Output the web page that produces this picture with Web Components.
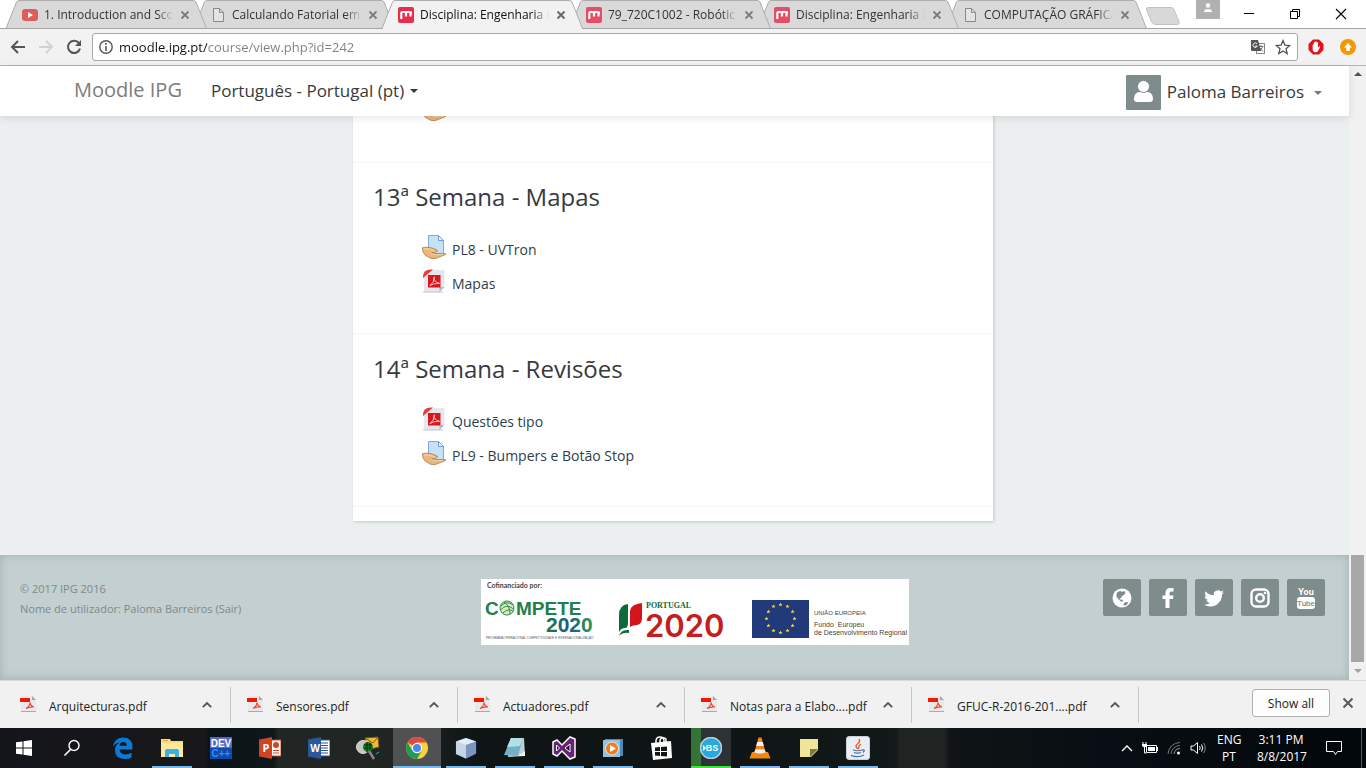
<!DOCTYPE html>
<html lang="pt">
<head>
<meta charset="utf-8">
<title>Disciplina: Engenharia Informática</title>
<style>
html, body { margin: 0; height: 100%; }
body { font-family: "Open Sans", "Noto Sans", sans-serif; overflow: hidden; }
</style>
</head>
<body>
<desktop-screen></desktop-screen>
<script>
const BASE = `
*, *::before { box-sizing: border-box; }
button, select, input { font: inherit; color: inherit; background: none; border: 0; margin: 0; padding: 0; }
a { color: inherit; text-decoration: none; }
`;

function define(name, css, html) {
  const tpl = document.createElement('template');
  customElements.define(name, class extends HTMLElement {
    constructor() {
      super();
      this.attachShadow({ mode: 'open' });
    }
    connectedCallback() {
      tpl.innerHTML = `<style>${BASE}${css}</style>${typeof html === 'function' ? html(this) : html}`;
      this.shadowRoot.replaceChildren(tpl.content.cloneNode(true));
    }
  });
}

/* name: [width, height, markup] */
const ICONS = {
  youtube: [16, 16, `<rect y="2" width="16" height="12" rx="3" fill="#e0403f"/><path d="M6 5l5 3-5 3z" fill="#fff"/>`],
  page: [16, 16, `<path d="M3.500 1.500h6l4 4v9h-10z M9.500 1.500v4h4" fill="#e6e6e6" stroke="#777"/>`],
  moodle: [16, 16, `<rect width="16" height="16" rx="2" fill="#e92d4a"/><path d="M3.300 12V6Q3.300 5 4.500 5H11.500Q12.500 5 12.500 6V9.500M8 5V9.500M12 5.500h2" fill="none" stroke="#fff" stroke-width="2.200"/>`],
  tabclose: [10, 10, `<path d="M1.500 1.500l7 7M8.500 1.500l-7 7" stroke="#666" stroke-width="1.800"/>`],
  newtab: [36, 18, `<path d="M3 .5h23q2 0 3 2l5 12q1 3-2 3H11q-3 0-4-2L1.500 3Q1 .5 3 .5z" fill="#d8d8d8" stroke="#c2c2c2"/>`],
  profile: [24, 19, `<rect width="24" height="19" fill="#b0b0b0"/><circle cx="12" cy="5.500" r="2.200" fill="#fff"/><path d="M8 12q0-3 4-3t4 3z" fill="#fff"/>`],
  min: [12, 12, `<path d="M1 5.500h10" stroke="#000"/>`],
  restore: [12, 12, `<path d="M1.500 3.500h7v7h-7zM3.500 3.500v-2h7v7h-2" fill="none" stroke="#000"/>`],
  close: [12, 12, `<path d="M1 1l10 10M11 1L1 11" stroke="#000" stroke-width="1.100"/>`],
  back: [16, 16, `<path d="M15 8H2.500M8 2L2 8l6 6" fill="none" stroke="#555" stroke-width="2"/>`],
  forward: [16, 16, `<path d="M1 8h12.500M8 2l6 6-6 6" fill="none" stroke="#d2d2d2" stroke-width="2"/>`],
  reload: [16, 16, `<path d="M13 4.200A6.100 6.100 0 1 0 14 9.500" fill="none" stroke="#555" stroke-width="2"/><path d="M15 1v6H9z" fill="#555"/>`],
  info: [14, 14, `<circle cx="7" cy="7" r="6.200" fill="none" stroke="#555" stroke-width="1.400"/><path d="M7 6v5M7 3v1.800" stroke="#555" stroke-width="1.600"/>`],
  translate: [16, 14, `<rect x="6.500" y="3.500" width="8" height="10" fill="#fff" stroke="#888"/><path d="M8.500 6.500h5M11 5v1.500M12.500 7q-1 3-4 4M10 8l3 3.500" stroke="#777" fill="none"/><path d="M1 0h7l3 11H2q-1 0-1-1z" fill="#555"/><path d="M7 3.800A2.200 2.200 0 1 0 7.300 6H5.200" fill="none" stroke="#fff"/>`],
  star: [16, 16, `<path d="M8 1.500l1.900 4.600 4.900.4-3.800 3.200 1.200 4.800L8 11.900l-4.200 2.600L5 9.700 1.200 6.500l4.900-.4z" fill="none" stroke="#555" stroke-width="1.300"/>`],
  adblock: [16, 16, `<path d="M5 .5h6L15.500 5v6L11 15.500H5L.5 11V5z" fill="#e0141f"/><path d="M4.700 9V5.500q.7-.7 1.100 0V8 3.500q.8-.8 1.300 0V7.500 2.700q.8-.8 1.400 0v5V3.500q.8-.7 1.400 0V9l1-1.500q1-.6 1.300.3L10 12q-1 1.500-3 1.300-2-.3-2.300-2.300z" fill="#fff"/>`],
  uparrow: [16, 16, `<circle cx="8" cy="8" r="8" fill="#f39800"/><path d="M8 4l4 4.500H9.700V12H6.300V8.500H4z" fill="#fff"/>`],
  caret: [8, 4, `<path d="M0 0h8L4 4z" fill="currentColor"/>`],
  avatar: [35, 35, `<rect width="35" height="35" rx="1" fill="#7f8c8c"/><path d="M8 24q0-6 5-7h9q5 1 5 7 0 3-3 3H11q-3 0-3-3z" fill="#fff"/><circle cx="17.500" cy="11.500" r="6" fill="#fff" stroke="#7f8c8c" stroke-width="1"/>`],
  assign: [24, 24, `<path d="M6.500.5h10l5 5V18.500H6.500z" fill="#c5e2f8" stroke="#7fa9dd"/><path d="M16.500.5v5h5z" fill="#eef7ff" stroke="#6b9be0"/><path d="M0 13q3-1.500 8-.5 4 .8 7 2.500 1.500 1-.2 1.700L9.500 18q4 1.200 9 .8l5-.3q.8.500-.5 1.300L14 23.300q-3 1-6-.3l-5-3Q.5 17 0 13z" fill="#eab67b" stroke="#a8713c" stroke-width=".7"/><path d="M2 14q5-1 11 2M9 18.500q5 2 12 .8" stroke="#f8d6a8" fill="none"/>`],
  pdf: [24, 24, `<path d="M5 1h17q.5 0 .5.500V18l-5 5H2V7z" fill="#e6e6ee"/><path d="M22.500 18l-5 5V18z" fill="#b9bac8"/><path d="M1 23h20" stroke="#c2c2cb"/><path d="M1 9V6.500Q2 1 8 .5h3z" fill="#ee3a35"/><rect x="6" y="6" width="12.500" height="12.500" fill="#dc1519"/><path d="M8 16.500q4-3 4.500-8 .2-1.500-.7 0 0 4.500 5.500 5.500 1 .5-.5.500-5-.5-8.800 2z" fill="none" stroke="#fbd5d5" stroke-width=".9"/>`],
  globe: [20, 20, `<circle cx="10" cy="10" r="9.500" fill="#fff"/><path d="M5 4.500l3.500-1.800 1 1.300 2.500-1 1.500 1.500-1 2-2.500 1.500-1 2-1.500.3.800 1.200 2 .2 1 1.200-1.500.8-2-1.200L6 10.500 4.500 9V6.500zM11.500 15.500l2.500-1.500 2.500.3-2 2.700-2.800.8z" fill="#7f8c8c"/>`],
  facebook: [20, 20, `<path d="M7.500 20v-9H4.500V7.500h3V5q0-5 5-5h3v3.500h-2q-2 0-2 1.800v2.200h4L15 11h-3.500v9z" fill="#fff"/>`],
  twitter: [20, 20, `<path d="M20 4.200q-1 .5-2.300.6 1.200-.8 1.800-2.200-1.200.7-2.600 1a4.100 4.100 0 0 0-7 3.700Q4.800 7 1.500 3.200.2 6.800 2.700 8.600q-1 0-1.900-.5 0 3 3.300 4-.9.300-1.800.1.800 2.600 3.800 2.800Q3.300 17 0 16.700q3 1.800 6.300 1.800c7.500 0 11.900-6.200 11.700-12.200q1.200-.8 2-2.100z" fill="#fff"/>`],
  instagram: [20, 20, `<rect x="1.500" y="1.500" width="17" height="17" rx="4.500" fill="none" stroke="#fff" stroke-width="2.400"/><circle cx="10" cy="10" r="3.800" fill="none" stroke="#fff" stroke-width="2.400"/><circle cx="15" cy="5" r="1.300" fill="#fff"/>`],
  yt: [22, 24, `<rect x="2" y="11" width="18" height="12" rx="3" fill="#fff"/><text x="11" y="9" text-anchor="middle" font-family="Roboto" font-weight="700" font-size="9" fill="#fff">You</text><text x="11" y="20" text-anchor="middle" font-family="Roboto" font-weight="500" font-size="8" fill="#7f8c8c">Tube</text>`],
  file: [16, 16, `<path d="M1 0h11l4 4v11.500H1z" fill="#e9e9e9"/><path d="M12 0v4h4z" fill="#a5a5a5"/><path d="M1 15.500h15" stroke="#aaa"/><rect y="2" width="10" height="4" fill="#f01a00"/><path d="M6 12.500q4-2.500 4-6 1 4 4 4.500-4-.5-8 1.500z" fill="none" stroke="#f0473a" stroke-width="1.100"/>`],
  chevron: [10, 6, `<path d="M.8 5.200L5 1l4.200 4.200" fill="none" stroke="#555" stroke-width="1.800"/>`],
  shelfclose: [12, 12, `<path d="M1.500 1.500l9 9M10.500 1.500l-9 9" stroke="#5a5a5a" stroke-width="2"/>`],
  windows: [16, 16, `<path d="M0 2.300L6.500 1.400V7.500H0zM7.500 1.200L16 0v7.500H7.500zM0 8.500h6.500v6.100L0 13.700zM7.500 8.500H16V16l-8.500-1.200z" fill="#fff"/>`],
  search: [18, 18, `<circle cx="11" cy="6.500" r="5" fill="none" stroke="#fff" stroke-width="1.400"/><path d="M7.500 10.500L1.500 16.500" stroke="#fff" stroke-width="1.600"/>`],
  edge: [22, 22, `<path d="M1 10Q2 1 11 .5 20.500.5 20.500 10v2.500H7.500q.5 5 6 5 3.500 0 6-1.700v4.700q-3 1.500-7 1.500Q3 21.500 3 13q0-5 4.500-7.500Q3 6 1 10zM7.500 8.800h7.300q0-3.800-3.600-3.800-3.200 0-3.700 3.800z" fill="#0a7ad6"/>`],
  explorer: [22, 18, `<path d="M0 0h9l1 2h12v16H0z" fill="#fbdc7a"/><path d="M0 4h22v14H0z" fill="#ffe9a0"/><path d="M4 18v-6q0-2 2-2h10q2 0 2 2v6h-4v-3H8v3z" fill="#38b1e4"/><path d="M2 1.500h5" stroke="#e0a83c"/>`],
  devcpp: [22, 22, `<rect width="22" height="22" fill="#1149a8"/><rect width="22" height="11" fill="#5468c8"/><text x="11" y="10" text-anchor="middle" font-family="Liberation Sans" font-weight="700" font-size="10" fill="#fff">DEV</text><text x="11" y="20" text-anchor="middle" font-family="Liberation Sans" font-weight="700" font-size="10" fill="#2a90ff">C++</text>`],
  powerpoint: [22, 22, `<rect x="11" y="3" width="11" height="16" fill="#fff" stroke="#d04423"/><circle cx="17" cy="8" r="3" fill="#d04423"/><path d="M14 13.500h6M14 16h6" stroke="#d04423" stroke-width="1.200"/><path d="M0 2.500L13 0v22L0 19.500z" fill="#d04423"/><text x="7" y="15" text-anchor="middle" font-family="Open Sans" font-weight="700" font-size="11" fill="#fff">P</text>`],
  word: [22, 22, `<rect x="11" y="3" width="11" height="16" fill="#fff" stroke="#2b579a"/><path d="M13 6h7M13 8.500h7M13 11h7M13 13.500h7M13 16h7" stroke="#2b579a" stroke-width="1.200"/><path d="M0 2.500L13 0v22L0 19.500z" fill="#2b579a"/><text x="7" y="15" text-anchor="middle" font-family="Open Sans" font-weight="700" font-size="10" fill="#fff">W</text>`],
  tracer: [24, 24, `<path d="M9 2l13-1 1 10-12 3z" fill="#f0b93c" stroke="#7c5511"/><path d="M9 2l8 5 5-6" fill="none" stroke="#7c5511"/><circle cx="7" cy="11" r="6.500" fill="#c6c6c0" stroke="#ddd"/><circle cx="12" cy="11" r="5" fill="#1b7d26"/><path d="M8 9h8M8 12h8M11 6v10M14 7v9" stroke="#062f0a"/><path d="M13 15l5 8" stroke="#888" stroke-width="2.500"/><path d="M20 18l3-2" stroke="#148b9b" stroke-width="1.500"/>`],
  chrome: [22, 22, `<circle cx="11" cy="11" r="11" fill="#fbd13b"/><path d="M11 11L1.500 5.500A11 11 0 0 1 20.500 5.500H11z" fill="#dd4b3e"/><path d="M1.500 5.500A11 11 0 0 0 11 22l4.800-8.500L11 11l-5 2z" fill="#1b9d58"/><circle cx="11" cy="11" r="5.200" fill="#fff"/><circle cx="11" cy="11" r="4" fill="#4a87ee"/>`],
  cube: [22, 22, `<path d="M1 4.500L11 1l10 3.500v12L11 21.500 1 17z" fill="#a9bbd3" stroke="#2a3a9b" stroke-width=".7"/><path d="M1 4.500L11 8v13.500L1 17z" fill="#c5d5e4"/><path d="M1 4.500L11 1l10 3.500L11 8z" fill="#e3edf5"/><path d="M11 8l10-3.500v12L11 21.500z" fill="#7d95bc"/>`],
  notepad: [24, 24, `<path d="M8 2h13l1 18-17 1z" fill="#c4ced2"/><path d="M8 2h12l-5 18L1 19z" fill="#6fb2c6"/><path d="M8 2l-4 9 13-1 3-8z" fill="#b3dfe7"/><path d="M15 20l7-5v5z" fill="#eff3f4"/>`],
  vs: [24, 24, `<path d="M1 6l4-2 5 5 8-8 5 2v18l-5 2-8-8-5 5-4-2z" fill="#68217a" stroke="#fff" stroke-width="1.500"/><path d="M4.500 9v6l3-3zM13 12l5-4v8z" fill="#101616" stroke="#fff"/>`],
  player: [20, 20, `<rect x="2" y="1" width="18" height="17" fill="#4c8cb4"/><rect y="2" width="17" height="17" fill="#8fc3df"/><circle cx="9" cy="10.500" r="6.500" fill="#f07c1c" stroke="#e8e8e8"/><path d="M7 7l6 3.500L7 14z" fill="#fff"/>`],
  store: [22, 24, `<path d="M0 7l20-2 1 17-19 2z" fill="#fff"/><path d="M5 9V5q0-4 4-4t4 4v2M9 7V4q2-4 6-1v4" fill="none" stroke="#fff" stroke-width="1.500"/><path d="M4 11.500l5-.5v4H4zM10 11l6-.5V15h-6zM4 16h5v4l-5-.5zM10 16h6v4.500L10 20z" fill="#101616"/>`],
  bs: [22, 22, `<circle cx="11" cy="11" r="10.500" fill="#26a9de" stroke="#bfcdd3" stroke-width="1.500"/><path d="M3 8l3 3-3 3z" fill="#fff"/><text x="12" y="14" text-anchor="middle" font-family="Liberation Sans" font-weight="700" font-size="9" fill="#fff">BS</text>`],
  vlc: [22, 22, `<path d="M3 15h16l2.500 6.500H.5z" fill="#f28a0d"/><path d="M9.500.5h3L17 17q-6 3-12 0z" fill="#f5841b"/><path d="M8.300 5h5.400l1.100 4H7.200zM6.200 12.500h9.600l.9 3q-5.700 2-11.400 0z" fill="#f2f2f2"/>`],
  sticky: [18, 18, `<path d="M0 0h18v11l-7 7H0z" fill="#efe49a"/><path d="M18 10h-8v8z" fill="#827a3d"/>`],
  java: [24, 24, `<rect x=".5" y=".5" width="23" height="23" rx="2.500" fill="#e8eef3" stroke="#c9d0d6"/><path d="M12 13q-4-3 0-5.500Q14.500 5.500 13 3M13 13q-1.500-2.500 2-5" fill="none" stroke="#e6662a" stroke-width="1.400"/><path d="M7 14q5 1.500 9 0M8 16.500q4 1.200 7 0M5 19.500q7 2.500 13-.5M16 14q4-.5 1 2.500" fill="none" stroke="#41719c" stroke-width="1.200"/>`],
  traychev: [12, 8, `<path d="M1 7l5-5 5 5" fill="none" stroke="#fff" stroke-width="1.300"/>`],
  battery: [16, 12, `<path d="M4.500 3.500h10v7h-10z" fill="none" stroke="#fff"/><rect x="6" y="5" width="7" height="4" fill="#fff"/><path d="M15.500 5v4M1 0v2M4 0v2M2.500 5v6h2" fill="none" stroke="#fff"/><path d="M0 2h5v2q-2.500 2.500-5 0z" fill="#fff"/>`],
  wifi: [14, 14, `<path d="M1 13A12 12 0 0 1 13 1.500M4 13A9 9 0 0 1 13 4.500" fill="none" stroke="#777"/><path d="M7 13a6 6 0 0 1 6-5.500" fill="none" stroke="#999"/><circle cx="11.500" cy="12" r="1.500" fill="#fff"/>`],
  volume: [18, 14, `<path d="M1 5h2.500L7.500 1.500v11L3.500 9H1z" fill="none" stroke="#fff"/><path d="M9.500 5q1.500 2 0 4M11.500 3.500q2.500 3.500 0 7" fill="none" stroke="#fff"/><path d="M13.500 2q3.500 5 0 10" fill="none" stroke="#888"/>`],
  action: [16, 16, `<path d="M.5 1.500h15v10h-4l-2 3-2-3h-7z" fill="none" stroke="#fff"/>`],
};

define('ui-icon', `:host { display: block; flex: none; line-height: 0; } svg { display: block; }`, (el) => {
  const [w, h, body] = ICONS[el.getAttribute('name')];
  return `<svg width="${w}" height="${h}" viewBox="0 0 ${w} ${h}" aria-hidden="true">${body}</svg>`;
});

/* ---------- browser frame ---------- */
define('browser-tab', `
:host { display: block; position: relative; flex: 0 1 201px; min-width: 0; height: 29px; margin-right: -13px; font-size: 12px; color: #333; }
:host([active]) { color: #111; }
.shape { position: absolute; inset: 0; width: 100%; height: 29px; }
.row { position: relative; display: flex; align-items: center; height: 29px; padding: 1px 14px 0 16px; }
:host(:not([active])) ui-icon { opacity: .8; }
.title { flex: 1; min-width: 0; margin: 0 4px 0 6px; white-space: nowrap; overflow: hidden; text-align: left; line-height: 18px;
  -webkit-mask-image: linear-gradient(90deg, #000 calc(100% - 16px), transparent); mask-image: linear-gradient(90deg, #000 calc(100% - 16px), transparent); }
.x { display: flex; align-items: center; justify-content: center; width: 16px; height: 16px; }
`, (el) => `
<svg class="shape" viewBox="0 0 201 29" preserveAspectRatio="none" aria-hidden="true">
<path d="M0 28.500L10.500 2Q11.500.5 13 .5H187Q189 .5 190 2L200.500 28.500" fill="${el.hasAttribute('active') ? '#f2f2f2' : '#d9d9d9'}" stroke="#acacac"/>
${el.hasAttribute('active') ? '<path d="M1 28.500H200" stroke="#f2f2f2"/>' : '<path d="M0 28.500H201" stroke="#a3a3a3"/>'}</svg>
<div class="row"><ui-icon name="${el.getAttribute('icon')}"></ui-icon>
<button class="title" role="tab"><slot></slot></button>
<button class="x" aria-label="Fechar"><ui-icon name="tabclose"></ui-icon></button></div>`);

define('tab-strip', `
:host { display: flex; height: 29px; padding-left: 6px; background: #fff; border-bottom: 1px solid #a3a3a3; }
.tabs { display: flex; flex: 0 1 1141px; min-width: 0; height: 29px; }
.new { align-self: flex-start; margin: 7px 0 0 -2px; position: relative; }
.fill { flex: 1; }
.profile { align-self: flex-start; margin-right: 6px; }
.win { display: flex; padding-right: 2px; }
.win button { width: 46px; height: 27px; display: flex; align-items: center; justify-content: center; }
`, `
<div class="tabs" role="tablist">
<browser-tab icon="youtube" style="z-index:6">1. Introduction and Scope</browser-tab>
<browser-tab icon="page" style="z-index:5">Calculando Fatorial em C</browser-tab>
<browser-tab icon="moodle" style="z-index:7" active>Disciplina: Engenharia Inf</browser-tab>
<browser-tab icon="moodle" style="z-index:4">79_720C1002 - Robótica</browser-tab>
<browser-tab icon="moodle" style="z-index:3">Disciplina: Engenharia Inf</browser-tab>
<browser-tab icon="page" style="z-index:2">COMPUTAÇÃO GRÁFICA</browser-tab>
</div>
<button class="new" aria-label="Novo separador"><ui-icon name="newtab"></ui-icon></button>
<div class="fill"></div>
<button class="profile" aria-label="Perfil"><ui-icon name="profile"></ui-icon></button>
<div class="win"><button aria-label="Minimizar"><ui-icon name="min"></ui-icon></button><button aria-label="Restaurar"><ui-icon name="restore"></ui-icon></button><button aria-label="Fechar janela"><ui-icon name="close"></ui-icon></button></div>`);

define('browser-toolbar', `
:host { display: flex; align-items: center; height: 37px; padding: 0 10px 0 4px; background: #f2f2f2; border-bottom: 1px solid #b6b4b6; }
.nav { width: 28px; height: 28px; display: flex; align-items: center; justify-content: center; }
.box { flex: 1; display: flex; align-items: center; height: 28px; margin: 0 10px 0 4px; padding: 0 6px; background: #fff; border: 1px solid #a9a9a9; border-radius: 3px; }
input { flex: 1; min-width: 0; height: 26px; margin: 0 6px; outline: 0; font-size: 13px; line-height: 20px;
  background: linear-gradient(90deg, #111 88px, #808080 88px); -webkit-background-clip: text; background-clip: text; -webkit-text-fill-color: transparent; }
.icons { display: flex; gap: 9px; align-items: center; }
.ext { display: flex; gap: 16px; }
`, `
<button class="nav" aria-label="Anterior"><ui-icon name="back"></ui-icon></button>
<button class="nav" aria-label="Seguinte"><ui-icon name="forward"></ui-icon></button>
<button class="nav" aria-label="Recarregar"><ui-icon name="reload"></ui-icon></button>
<div class="box"><ui-icon name="info"></ui-icon><input type="text" aria-label="Endereço" value="moodle.ipg.pt/course/view.php?id=242">
<div class="icons"><button aria-label="Traduzir"><ui-icon name="translate"></ui-icon></button><button aria-label="Favorito"><ui-icon name="star"></ui-icon></button></div></div>
<div class="ext"><button aria-label="Bloqueador"><ui-icon name="adblock"></ui-icon></button><button aria-label="Atualizar"><ui-icon name="uparrow"></ui-icon></button></div>`);

/* ---------- page ---------- */
define('site-header', `
:host { display: flex; align-items: center; height: 50px; padding: 0 27px 0 74px; background: #fff; color: #373a3c; font-size: 17px; position: relative; z-index: 2; box-shadow: 0 2px 8px rgba(0,0,0,.1); }
.brand { font-size: 20px; color: #7c7c7c; margin-right: 29px; line-height: 28px; padding-bottom: 2px; }
.lang { display: flex; align-items: center; gap: 6px; }
select { appearance: none; -webkit-appearance: none; line-height: 24px; field-sizing: content; }
.user { margin-left: auto; display: flex; align-items: center; padding-top: 3px; line-height: 24px; }
.user span { margin: 0 10px 2px 6px; }
.user .c { color: #777; }
`, `
<a class="brand" href="#">Moodle IPG</a>
<label class="lang"><select aria-label="Idioma"><option>Português - Portugal (pt)</option></select><ui-icon name="caret"></ui-icon></label>
<button class="user" aria-haspopup="menu"><ui-icon name="avatar"></ui-icon><span>Paloma Barreiros</span><ui-icon class="c" name="caret"></ui-icon></button>`);

define('course-item', `
:host { display: block; height: 34px; padding: 5px 0 0 49px; font-size: 14px; color: #34495e; }
a { display: flex; gap: 6px; }
span { line-height: 20px; padding-top: 5px; color: #2f3e4e; }
`, (el) => `<a href="#" aria-label="${el.textContent || 'Trabalho'}"><ui-icon name="${el.getAttribute('icon')}"></ui-icon><span><slot></slot></span></a>`);

define('course-section', `
:host { display: block; flex: none; padding: 0 20px 35px; border-bottom: 2px solid #f9f9f9; }
h3 { margin: 0; padding: 19px 0 18px; font-size: 24px; line-height: 30px; font-weight: 400; color: #373a3c; }
`, (el) => `${el.hasAttribute('heading') ? `<h3>${el.getAttribute('heading')}</h3>` : ''}<slot></slot>`);

define('course-content', `
:host { display: flex; flex-direction: column; justify-content: flex-end; flex: 1; min-height: 0; overflow: hidden; padding: 0 356px 34px 353px; background: #ebeff0; }
main { display: flex; flex-direction: column; justify-content: flex-end; flex: 1 0 auto; background: #fff; padding-bottom: 14px; box-shadow: 1px 1px 3px rgba(0,0,0,.16); }
`, `<main>
<course-section><course-item icon="assign"></course-item></course-section>
<course-section heading="13ª Semana - Mapas"><course-item icon="assign">PL8 - UVTron</course-item><course-item icon="pdf">Mapas</course-item></course-section>
<course-section heading="14ª Semana - Revisões"><course-item icon="pdf">Questões tipo</course-item><course-item icon="assign">PL9 - Bumpers e Botão Stop</course-item></course-section>
</main>`);

const stars = Array.from({ length: 12 }, (_, i) => {
  const a = i * Math.PI / 6;
  return `<path transform="translate(${(299.5 + 14 * Math.sin(a)).toFixed(1)} ${(39.5 - 14 * Math.cos(a)).toFixed(1)})" d="M0-2L.6-.6 2-.6.9.3 1.300 1.700 0 .9-1.300 1.700-.9.3-2-.6-.6-.6z"/>`;
}).join('');

define('funding-banner', `:host { display: block; line-height: 0; } svg { display: block; }`, `
<svg width="428" height="66" viewBox="0 0 428 66" role="img" aria-label="Cofinanciado por">
<defs><linearGradient id="g"><stop offset="0" stop-color="#1f7a4a"/><stop offset=".5" stop-color="#1a5c86"/><stop offset="1" stop-color="#2f9a4b"/></linearGradient></defs>
<rect width="428" height="66" fill="#fff"/>
<text x="6" y="9" font-family="Lato" font-size="7" font-weight="700" fill="#444">Cofinanciado por:</text>
<g font-family="Liberation Sans" font-weight="700" fill="#24804a"><text x="4" y="36" font-size="19">C</text><text x="35" y="36" font-size="19">MPETE</text><text x="65" y="53" font-size="21" fill="url(#g)">2020</text></g>
<circle cx="26" cy="29" r="7" fill="#dcebc0" stroke="#2b8b4c" stroke-width="1"/><path d="M20 27q6-6 12-1M19.500 31q6-7 13-1M22 34q5-5 10-2M23 23q6 4 6 12" stroke="#2b8b4c" fill="none"/>
<text x="5" y="60" font-family="Liberation Sans" font-size="3" fill="#555">PROGRAMA OPERACIONAL COMPETITIVIDADE E INTERNACIONALIZAÇÃO</text>
<path d="M138 51V36q0-10 9-11v19q0 5-3 5-4 0-6 4z" fill="#0c6b3c"/><path d="M149 48V32q1-7 12-8v15q0 6-5 7-4 0-7 2z" fill="#d4141c"/><path d="M138 57q2-7 10-6v3q-6-1-10 3z" fill="#0c6b3c"/>
<text x="165" y="29" font-family="Liberation Serif" font-weight="700" font-size="8" fill="#0c6b3c">PORTUGAL</text>
<text x="164" y="58" font-family="Inter" font-weight="600" font-size="31" fill="#c61d23">2020</text>
<rect x="271" y="21" width="57" height="38" fill="#22397a"/><g fill="#f3e03c">${stars}</g>
<g font-family="Liberation Sans" fill="#444"><text x="333" y="36" font-size="6">UNIÃO EUROPEIA</text><text x="333" y="48" font-size="7">Fundo&nbsp; Europeu</text><text x="333" y="56" font-size="7">de Desenvolvimento Regional</text></g>
</svg>`);

define('site-footer', `
:host { display: grid; grid-template-columns: 461fr 428px 416fr; align-items: start; height: 125px; padding: 24px 24px 0 20px; background: #c3cfd0; color: #7c8a8b; font-size: 11px; line-height: 20px; box-shadow: inset 0 0 8px rgba(80,100,100,.3); border-bottom: 1px solid #bbb; }
p { margin: 0; }
nav { display: flex; gap: 8px; justify-content: flex-end; }
nav a { display: flex; align-items: center; justify-content: center; width: 38px; height: 37px; background: #7f8c8c; border-radius: 2px; }
`, `
<div><p>© 2017 IPG 2016</p><p>Nome de utilizador: <a href="#">Paloma Barreiros</a> (<a href="#">Sair</a>)</p></div>
<funding-banner></funding-banner>
<nav>${['globe', 'facebook', 'twitter', 'instagram', 'yt'].map((n) => `<a href="#" aria-label="${n}"><ui-icon name="${n}"></ui-icon></a>`).join('')}</nav>`);

define('scroll-rail', `
:host { display: flex; flex-direction: column; align-items: center; justify-content: space-between; width: 17px; background: #f1f1f1; color: #505050; }
.cap { height: 17px; display: flex; align-items: center; }
.up { transform: rotate(180deg); }
.thumb { width: 13px; height: 107px; margin-top: auto; background: #a8a8a8; }
.down { height: 18px; color: #a0a0a0; }
`, `<div class="cap up"><ui-icon name="caret"></ui-icon></div><div class="thumb"></div><div class="cap down"><ui-icon name="caret"></ui-icon></div>`);

define('page-view', `
:host { display: flex; flex: 1; min-height: 0; }
.col { display: flex; flex-direction: column; flex: 1; min-width: 0; }
`, `<div class="col"><site-header></site-header><course-content></course-content><site-footer></site-footer></div><scroll-rail></scroll-rail>`);

/* ---------- download shelf ---------- */
define('download-item', `
:host { display: flex; align-items: center; flex: 0 1 227px; height: 36px; padding: 0 18px 0 16px; border-right: 1px solid #c6c6c6; font-size: 12px; color: #222; }
:host(:first-of-type) { flex-basis: 231px; padding-left: 20px; }
.f { display: flex; align-items: center; gap: 13px; flex: 1; min-width: 0; white-space: nowrap; }
.f ui-icon { margin-bottom: 2px; }
.f span { padding-top: 3px; }
`, `<button class="f"><ui-icon name="file"></ui-icon><span><slot></slot></span></button><button aria-label="Opções"><ui-icon name="chevron"></ui-icon></button>`);

define('download-shelf', `
:host { display: flex; align-items: center; height: 48px; background: #f1f1f1; border-top: 1px solid #d8d8d8; padding-right: 12px; }
.all { margin-left: auto; width: 78px; height: 28px; margin-right: 12px; margin-bottom: 3px; background: #fdfdfd; border: 1px solid #b0b0b0; border-radius: 3px; font-size: 12px; color: #222; }
.x { margin-bottom: 3px; }
`, `
<download-item>Arquitecturas.pdf</download-item><download-item>Sensores.pdf</download-item><download-item>Actuadores.pdf</download-item><download-item>Notas para a Elabo....pdf</download-item><download-item>GFUC-R-2016-201....pdf</download-item>
<button class="all">Show all</button><button class="x" aria-label="Fechar barra"><ui-icon name="shelfclose"></ui-icon></button>`);

/* ---------- taskbar ---------- */
define('task-button', `
:host { display: block; width: 48px; height: 40px; }
button { position: relative; display: flex; align-items: center; justify-content: center; width: 48px; height: 40px; }
:host([open]) button::before { content: ""; position: absolute; left: 4px; right: 4px; bottom: 0; height: 2px; background: #76b9ed; }
:host([current]) button { background: #4f5152; }
:host([current]) button::before { left: 0; right: 0; }
:host([progress]) button { background: linear-gradient(90deg, #367336 10px, #2d3335 10px); width: 40px; margin: 0 4px; }
:host([progress]) button::before { left: 0; right: 0; background: #40e33c; }
`, (el) => `<button aria-label="${el.getAttribute('icon')}"><ui-icon name="${el.getAttribute('icon')}"></ui-icon></button>`);

define('task-bar', `
:host { display: flex; height: 40px; color: #fff; font-size: 12px; line-height: 17px;
  background: linear-gradient(90deg, #14151b, #18181a 206px, #0a1418 208px, #0e1719 274px, #212524 278px, #202524 392px, #0e1514 480px, #101616 780px, #131818 896px, #1f2322 900px, #1f2322 944px, #101416 950px, #080e13 1100px, #02070b); }
.apps { display: flex; gap: 1px; margin-left: 3px; }
.tray { margin-left: auto; display: flex; align-items: center; text-align: center; padding-right: 4px; }
.tray ui-icon { margin-right: 9px; }
.lang { width: 24px; margin: 0 16px 0 0; }
.clock { width: 48px; margin-right: 21px; white-space: nowrap; }
.edge { width: 1px; height: 40px; background: #50565a; margin-left: 10px; }
`, `
<task-button icon="windows"></task-button><task-button icon="search"></task-button>
<div class="apps"><task-button icon="edge"></task-button><task-button icon="explorer" open></task-button><task-button icon="devcpp"></task-button><task-button icon="powerpoint"></task-button><task-button icon="word"></task-button><task-button icon="tracer"></task-button><task-button icon="chrome" open current></task-button><task-button icon="cube" open></task-button><task-button icon="notepad" open></task-button><task-button icon="vs" open></task-button><task-button icon="player" open></task-button><task-button icon="store"></task-button><task-button icon="bs" open progress></task-button><task-button icon="vlc" open></task-button><task-button icon="sticky" open></task-button><task-button icon="java" open></task-button></div>
<div class="tray"><ui-icon name="traychev"></ui-icon><ui-icon name="battery"></ui-icon><ui-icon name="wifi"></ui-icon><ui-icon name="volume"></ui-icon>
<div class="lang">ENG<br>PT</div><div class="clock">3:11 PM<br>8/8/2017</div><ui-icon name="action"></ui-icon><div class="edge"></div></div>`);

define('desktop-screen', `:host { display: flex; flex-direction: column; height: 100vh; }
tab-strip, browser-toolbar, download-shelf, task-bar { flex: none; }`,
`<tab-strip></tab-strip><browser-toolbar></browser-toolbar><page-view></page-view><download-shelf></download-shelf><task-bar></task-bar>`);
</script>
</body>
</html>
